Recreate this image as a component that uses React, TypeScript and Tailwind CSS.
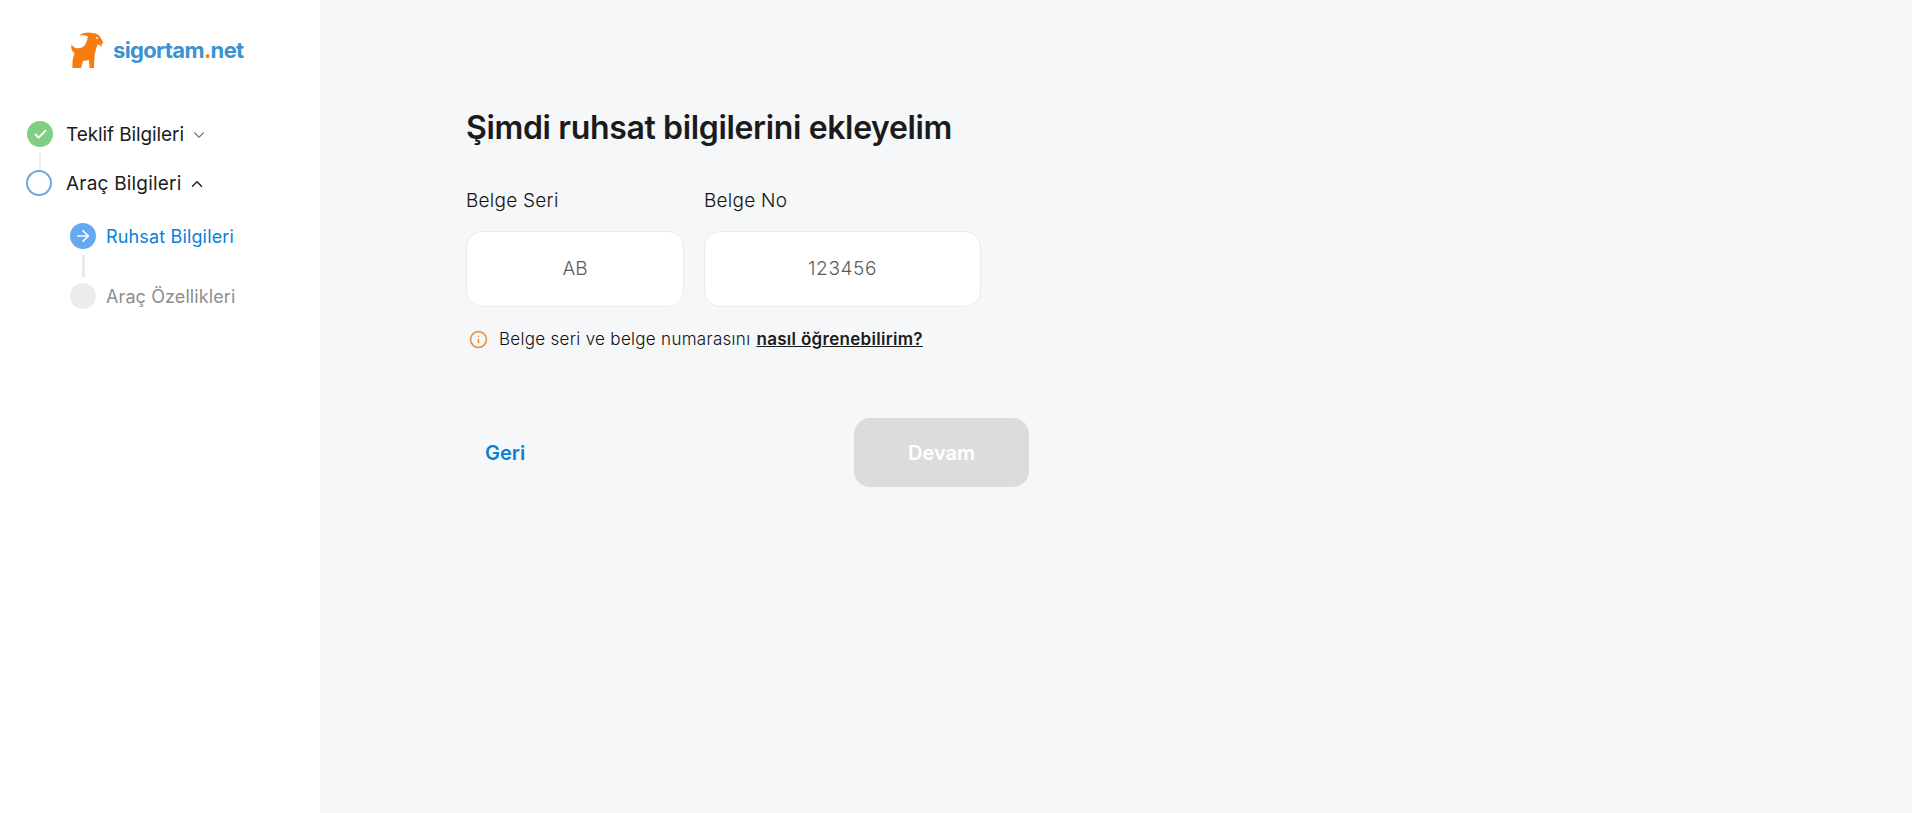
import { Check, ArrowRight, ChevronDown, ChevronUp, Info } from "lucide-react";

function Logo() {
  return (
    <div className="flex items-center h-[36px] ml-[71px]">
      <svg width="33" height="36" viewBox="0 0 33 36" className="shrink-0">
        <path
          fill="#f97c10"
          d="M8 3.5 C11 1 17 -0.5 21 1 C24 1 27 2 28.5 4 L31 8 L32.5 11.5 L30.5 11.5 L31 15 L28.5 13 L26.5 12.5 C25 17 24 21 23.5 24 L23 36 L18.5 36 L18 28 L12 29 L10 36 L1.5 36 C1 30 2 25 3.5 21.5 C1.5 20 -0.5 17 0.5 12.5 C2 14.5 3 15.5 5 16 C8 16.5 11 16 13 14 C15 12 16 8 17 4.5 C14 3 11 3 8 3.5 Z"
        />
        <circle cx="26" cy="6" r="1" fill="#ffffff" />
      </svg>
      <span className="ml-[9px] font-['Inter',sans-serif] text-[22px] font-bold leading-none text-[#3a93cf] tracking-[-0.65px]">
        sigortam<span className="text-[#f97c10]">.</span>net
      </span>
    </div>
  );
}

function Sidebar() {
  return (
    <aside className="w-[320px] shrink-0 bg-white pt-[32px]">
      <Logo />
      <div className="mt-[53px] pl-[26px]">
        <div className="flex h-[26px] items-center">
          <div className="ml-[1px] flex h-[26px] w-[26px] items-center justify-center rounded-full bg-[#7fcf82]">
            <Check size={15} strokeWidth={3} className="text-white" />
          </div>
          <span className="ml-[13px] pt-[2px] text-[19px] text-[#1c1c1c] tracking-[-0.1px]">Teklif Bilgileri</span>
          <ChevronDown size={18} strokeWidth={1.5} className="ml-[6px] mt-[2px] text-[#777]" />
        </div>
        <div className="ml-[13px] mt-[5px] h-[18px] w-[2px] bg-[#f0f1f3]" />
        <div className="flex h-[26px] items-center">
          <div className="h-[26px] w-[26px] rounded-full border-2 border-[#6aa9e8] bg-white" />
          <span className="ml-[14px] pt-[2px] text-[19px] text-[#1c1c1c] tracking-[0.2px]">Araç Bilgileri</span>
          <ChevronUp size={18} strokeWidth={2} className="ml-[6px] mt-[2px] text-[#222]" />
        </div>
        <div className="ml-[44px] mt-[27px]">
          <div className="flex h-[26px] items-center">
            <div className="flex h-[26px] w-[26px] items-center justify-center rounded-full bg-[#66a8f1]">
              <ArrowRight size={18} strokeWidth={2.25} className="text-white" />
            </div>
            <span className="ml-[10px] text-[18px] text-[#0b80d8] tracking-[0.15px]">Ruhsat Bilgileri</span>
          </div>
          <div className="ml-[12px] mt-[6px] h-[22px] w-[3px] bg-[#e8eaed]" />
          <div className="mt-[6px] flex h-[26px] items-center">
            <div className="h-[26px] w-[26px] rounded-full bg-[#ebecee]" />
            <span className="ml-[10px] text-[18px] text-[#8e8e8e] tracking-[0.1px]">Araç Özellikleri</span>
          </div>
        </div>
      </div>
    </aside>
  );
}

export default function App() {
  return (
    <div className="flex h-[813px] w-full overflow-hidden bg-[#f6f7f9] font-['Inter',sans-serif]">
      <Sidebar />
      <main className="pl-[146px] pt-[108px]">
        <h1 className="text-[32px] font-semibold leading-[40px] text-[#1b1b1b] tracking-[-0.35px]">
          Şimdi ruhsat bilgilerini ekleyelim
        </h1>
        <div className="mt-[42px] flex gap-[20px]">
          <div className="w-[218px]">
            <label className="block text-[19px] font-light leading-[22px] tracking-[0.25px] text-[#111]">Belge Seri</label>
            <div className="mt-[19px] flex h-[76px] items-center justify-center rounded-[16px] border border-[#e9eaec] bg-white text-[19px] font-light text-[#5c5c5c]">
              AB
            </div>
          </div>
          <div className="w-[277px]">
            <label className="block text-[19px] font-light leading-[22px] tracking-[0.25px] text-[#111]">Belge No</label>
            <div className="mt-[19px] flex h-[76px] items-center justify-center rounded-[16px] border border-[#e9eaec] bg-white text-[19px] font-light text-[#5c5c5c] tracking-[0.6px]">
              123456
            </div>
          </div>
        </div>
        <div className="mt-[21px] ml-[3px] flex items-center text-[17px] leading-[22px] text-[#111]">
          <Info size={19} strokeWidth={2} className="text-[#e8923f]" />
          <span className="ml-[11px] font-light tracking-[0.3px]">Belge seri ve belge numarasını</span>
          <a className="ml-[6px] font-semibold tracking-[0.3px] text-[#1b1b1b] underline">nasıl öğrenebilirim?</a>
        </div>
        <div className="mt-[68px] flex w-[563px] items-center justify-between">
          <button className="ml-[19px] text-[20px] font-semibold text-[#0b80d8]">Geri</button>
          <button className="h-[69px] w-[175px] rounded-[16px] bg-[#dcdcdc] text-[20px] font-semibold text-white">
            Devam
          </button>
        </div>
      </main>
    </div>
  );
}
